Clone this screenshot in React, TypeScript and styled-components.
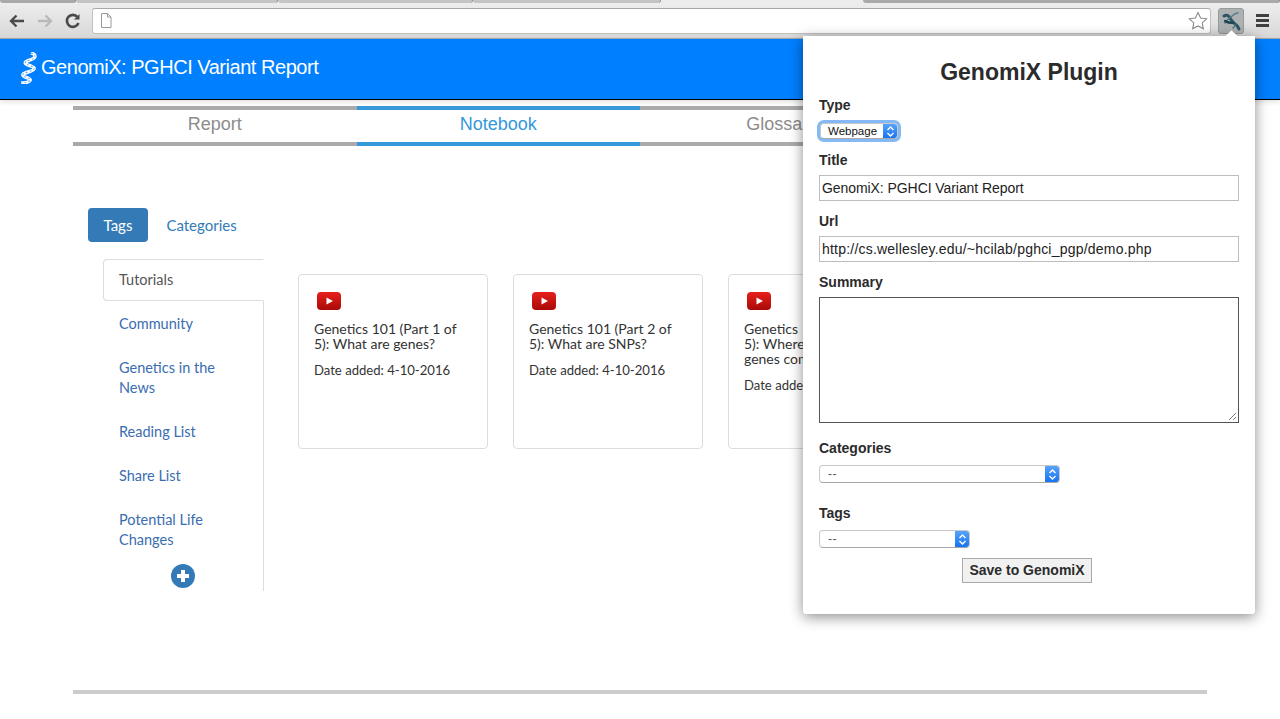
import React from 'react'
import styled, { createGlobalStyle } from 'styled-components'

const GlobalStyle = createGlobalStyle`
  html, body {
    margin: 0;
    padding: 0;
    height: 100%;
    background: #fff;
  }

  body {
    overflow: hidden;
    font-family: 'Liberation Sans', Arial, sans-serif;
  }

  * {
    box-sizing: border-box;
  }
`

const Page = styled.div`
  position: relative;
  width: 1280px;
  height: 719px;
  overflow: hidden;
`

const TabStrip = styled.div`
  display: flex;
  height: 3px;
  background: #ececec;
`

const StripTab = styled.div<{ $width: number; $gap?: number; $light?: boolean }>`
  width: ${({ $width }) => $width}px;
  margin-left: ${({ $gap }) => $gap || 0}px;
  height: 3px;
  background: ${({ $light }) => ($light ? '#c4c4c4' : '#a9a9a9')};
  border-right: 1px solid #8f8f8f;
  border-radius: 0 0 3px 3px;
`

const Toolbar = styled.div`
  display: flex;
  align-items: center;
  height: 36px;
  padding: 0 8px 0 8px;
  background: linear-gradient(#ededed, #d8d8d8);
  border-bottom: 1px solid #a6a6a6;
`

const NavIcon = styled.svg`
  width: 18px;
  height: 18px;
  margin-right: 10px;
  flex: none;
`

const Omnibox = styled.div`
  display: flex;
  align-items: center;
  justify-content: space-between;
  width: 1119px;
  height: 26px;
  padding: 0 2px 0 7px;
  background: #fff;
  border: 1px solid #c0c0c0;
  border-top-color: #a8a8a8;
  border-radius: 3px;
`

const ExtensionButton = styled.div`
  display: flex;
  align-items: center;
  justify-content: center;
  width: 26px;
  height: 26px;
  margin-left: 7px;
  background: #adb1b1;
  border: 1px solid #969a9b;
  border-radius: 3px;
`

const MenuButton = styled.div`
  display: flex;
  flex-direction: column;
  gap: 2px;
  width: 13px;
  margin-left: 12px;

  span {
    display: block;
    height: 3px;
    background: #3f3f3f;
  }
`

const Banner = styled.header`
  display: flex;
  align-items: center;
  gap: 4px;
  height: 61px;
  padding: 0 0 3px 20px;
  background: #007fff;
  border-bottom: 1px solid #000;
  color: #fff;
  font-size: 20px;
  letter-spacing: -0.47px;
  box-shadow: 0 2px 5px rgba(0, 0, 0, 0.12);
`

const Main = styled.main`
  width: 1134px;
  margin: 6px 0 0 73px;
`

const SectionTabs = styled.nav`
  display: grid;
  grid-template-columns: repeat(4, 1fr);
`

const SectionTab = styled.div<{ $active?: boolean }>`
  height: 40px;
  padding-top: 4px;
  border-top: 4px solid ${({ $active }) => ($active ? '#3498db' : '#aaaaaa')};
  border-bottom: 4px solid ${({ $active }) => ($active ? '#3498db' : '#aaaaaa')};
  color: ${({ $active }) => ($active ? '#3498db' : '#8c8c8c')};
  font-size: 18px;
  line-height: 20px;
  text-align: center;
`

const Notebook = styled.section`
  height: 548px;
  padding: 62px 0 0 15px;
  border-bottom: 4px solid #cccccc;
  font-family: Lato, 'Open Sans', sans-serif;
`

const Pills = styled.div`
  display: flex;
  gap: 3px;
  height: 34px;
`

const Pill = styled.div<{ $active?: boolean }>`
  height: 34px;
  padding: 0 15.5px;
  border-radius: 4px;
  background: ${({ $active }) => ($active ? '#337ab7' : 'transparent')};
  color: ${({ $active }) => ($active ? '#fff' : '#337ab7')};
  font-size: 15px;
  line-height: 34px;
`

const Columns = styled.div`
  display: flex;
  margin: 17px 0 0 15px;
`

const TagList = styled.div`
  display: flex;
  flex-direction: column;
  gap: 2px;
  width: 161px;
  height: 332px;
  border-right: 1px solid #dddddd;
`

const TagItem = styled.div<{ $active?: boolean }>`
  margin-right: ${({ $active }) => ($active ? '-1px' : '0')};
  padding: 10px 15px;
  border: 1px solid ${({ $active }) => ($active ? '#dddddd' : 'transparent')};
  border-right-color: ${({ $active }) => ($active ? '#fff' : 'transparent')};
  border-radius: 4px 0 0 4px;
  background: #fff;
  color: ${({ $active }) => ($active ? '#555555' : '#3a6db0')};
  font-size: 14.5px;
  line-height: 20px;
`

const AddButton = styled.svg`
  display: block;
  width: 24px;
  height: 24px;
  margin: 1px 0 0 68px;
`

const Cards = styled.div`
  display: flex;
  gap: 25px;
  margin: 15px 0 0 34px;
`

const Card = styled.article`
  flex: none;
  width: 190px;
  height: 175px;
  padding: 15px;
  border: 1px solid #dddddd;
  border-radius: 4px;
  background: #fff;
`

const CardIcon = styled.svg`
  display: block;
  width: 24px;
  height: 18px;
  margin: 2px 0 0 3px;
`

const CardTitle = styled.h3`
  margin: 11px 0 0;
  color: #333333;
  font-size: 14px;
  font-weight: 400;
  line-height: 15px;
`

const CardDate = styled.p`
  margin: 12px 0 0;
  color: #333333;
  font-size: 13.1px;
  line-height: 15px;
`

const Popup = styled.aside`
  position: absolute;
  top: 36px;
  left: 803px;
  width: 452px;
  height: 578px;
  padding: 22px 16px 0;
  background: #fff;
  border-radius: 0 0 3px 3px;
  box-shadow: 0 3px 14px rgba(0, 0, 0, 0.45);
  color: #2b2b2b;

  &::before {
    content: '';
    position: absolute;
    top: -4px;
    left: 424px;
    width: 9px;
    height: 9px;
    background: #fff;
    transform: rotate(45deg);
  }
`

const PopupTitle = styled.h1`
  margin: 0 0 11px;
  font-size: 23px;
  font-weight: 700;
  line-height: 28px;
  text-align: center;
`

const FieldLabel = styled.label<{ $gap?: number }>`
  display: block;
  margin-top: ${({ $gap }) => $gap || 0}px;
  font-size: 14px;
  font-weight: 700;
  line-height: 16px;
`

const TextField = styled.div<{ $spacing?: number }>`
  width: 420px;
  height: 26px;
  margin-top: 7px;
  padding: 0 2px;
  border: 1px solid #bdbdbd;
  color: #222;
  font-size: 14px;
  letter-spacing: ${({ $spacing }) => $spacing || 0}px;
  line-height: 24px;
`

const SummaryField = styled.div`
  position: relative;
  width: 420px;
  height: 126px;
  margin-top: 7px;
  border: 1px solid #555;
`

const Grip = styled.svg`
  position: absolute;
  right: 1px;
  bottom: 1px;
  width: 9px;
  height: 9px;
`

const SelectBox = styled.div<{ $width: number; $focused?: boolean }>`
  display: flex;
  justify-content: space-between;
  width: ${({ $width }) => $width}px;
  height: ${({ $focused }) => ($focused ? 16 : 18)}px;
  margin: ${({ $focused }) => ($focused ? '10px 0 0 1px' : '9px 0 0')};
  overflow: hidden;
  padding-left: ${({ $focused }) => ($focused ? 7 : 8)}px;
  background: #fff;
  border: 1px solid #c8c8c8;
  border-bottom-color: #a8a8a8;
  border-radius: 4px;
  color: ${({ $focused }) => ($focused ? '#111' : '#555')};
  font-size: ${({ $focused }) => ($focused ? 11.5 : 12)}px;
  letter-spacing: ${({ $focused }) => ($focused ? 0 : 0.5)}px;
  line-height: ${({ $focused }) => ($focused ? 14 : 16)}px;
  box-shadow: ${({ $focused }) => ($focused ? '0 0 0 3px #85b9f5' : 'none')};
`

const SelectArrows = styled.span`
  display: flex;
  align-items: center;
  justify-content: center;
  flex: none;
  width: 15px;
  margin: -1px -1px -1px 0;
  background: linear-gradient(#5aa6fb, #1470f0);
`

const SaveRow = styled.div`
  display: flex;
  justify-content: center;
  margin-top: 10px;
  padding-right: 4px;
`

const SaveButton = styled.button`
  width: 130px;
  height: 25px;
  padding: 0 0 2px;
  background: #f1f1f1;
  border: 1px solid #a9a9a9;
  color: #2b2b2b;
  font-family: 'Liberation Sans', Arial, sans-serif;
  font-size: 14px;
  font-weight: 700;
`

const videos = [
  { id: 1, title: 'Genetics 101 (Part 1 of 5): What are genes?' },
  { id: 2, title: 'Genetics 101 (Part 2 of 5): What are SNPs?' },
  { id: 3, title: 'Genetics 101 (Part 3 of 5): Where do human genes come from?' },
]

const tags = ['Tutorials', 'Community', 'Genetics in the News', 'Reading List', 'Share List', 'Potential Life Changes']

const helix = 'M11 1C17 3 16 6 10 8C3 10 4 12 11 14C16 16 15 18 8 20C1 22 1 24 8 26C13 28 9 31 1 31'

const DnaLogo = () => (
  <svg width="17" height="32" viewBox="0 0 17 32" fill="none">
    <path d={helix} stroke="#fff" strokeWidth="3.4" />
    <path d={helix} stroke="#6fb0f5" strokeWidth="1.1" strokeDasharray="2 2" />
  </svg>
)

const YouTubeIcon = () => (
  <CardIcon viewBox="0 0 24 18">
    <defs>
      <linearGradient id="yt" x1="0" y1="0" x2="0" y2="1">
        <stop offset="0" stopColor="#e8201c" />
        <stop offset="1" stopColor="#a80a08" />
      </linearGradient>
    </defs>
    <rect width="24" height="18" rx="4" fill="url(#yt)" />
    <path d="M9.500 5.500l6.500 3.500-6.500 3.500z" fill="#fff" />
  </CardIcon>
)

const StepperArrows = () => (
  <svg width="9" height="13" viewBox="0 0 9 13" fill="none" stroke="#fff" strokeWidth="1.4">
    <path d="M1.500 5L4.500 2l3 3M1.500 8l3 3 3-3" />
  </svg>
)

export default function App() {
  return (
    <Page>
      <GlobalStyle />
      <TabStrip>
        <StripTab $width={76} />
        <StripTab $width={202} $light />
        <StripTab $width={195} $light />
        <StripTab $width={188} $light />
        <StripTab $width={417} $gap={202} />
      </TabStrip>
      <Toolbar>
        <NavIcon viewBox="0 0 18 18" fill="none" stroke="#4a4a4a" strokeWidth="2.4">
          <path d="M16 9H3M8.500 3.500L3 9l5.500 5.500" />
        </NavIcon>
        <NavIcon viewBox="0 0 18 18" fill="none" stroke="#b9b9b9" strokeWidth="2.4">
          <path d="M2 9h13M9.500 3.500L15 9l-5.500 5.500" />
        </NavIcon>
        <NavIcon viewBox="0 0 18 18" fill="none" stroke="#4a4a4a" strokeWidth="2.6">
          <path d="M14.500 11a6 6 0 1 1-1-6" />
          <path d="M15.500 2v5.500H10z" fill="#4a4a4a" stroke="none" />
        </NavIcon>
        <Omnibox>
          <svg width="12" height="15" viewBox="0 0 12 15" fill="#fff" stroke="#9a9a9a">
            <path d="M1.500.5h6l3.500 3.500v10.500h-9.500zM7.500.5v3.500h3.500" />
          </svg>
          <svg width="20" height="19" viewBox="0 0 20 19" fill="#fff" stroke="#8a8a8a" strokeWidth="1.1">
            <path d="M10 1.500l2.600 5.500 6 .8-4.400 4.100 1.100 5.900-5.300-2.900-5.300 2.900 1.100-5.900L1.400 7.800l6-.8z" />
          </svg>
        </Omnibox>
        <ExtensionButton>
          <svg width="22" height="22" viewBox="0 0 22 22" fill="none" strokeLinecap="round">
            <path d="M4 6C7 4 9 6 10 8s2 4 5 6 3 3 4 5" stroke="#2c5564" strokeWidth="3" />
            <path d="M18 3c-3 0-5 2-7 4s-5 3-6 6" stroke="#55798a" strokeWidth="1.600" />
            <path d="M5 11c3 2 5 2 8 2" stroke="#1f4050" strokeWidth="2.200" />
            <path d="M13 18c2-1 2-2 2-3" stroke="#55798a" strokeWidth="1.500" />
          </svg>
        </ExtensionButton>
        <MenuButton>
          <span />
          <span />
          <span />
        </MenuButton>
      </Toolbar>
      <Banner>
        <DnaLogo />
        GenomiX: PGHCI Variant Report
      </Banner>
      <Main>
        <SectionTabs>
          <SectionTab>Report</SectionTab>
          <SectionTab $active>Notebook</SectionTab>
          <SectionTab>Glossary</SectionTab>
          <SectionTab />
        </SectionTabs>
        <Notebook>
          <Pills>
            <Pill $active>Tags</Pill>
            <Pill>Categories</Pill>
          </Pills>
          <Columns>
            <TagList>
              {tags.map((tag, i) => (
                <TagItem key={tag} $active={i === 0}>
                  {tag}
                </TagItem>
              ))}
              <AddButton viewBox="0 0 24 24">
                <circle cx="12" cy="12" r="12" fill="#337ab7" />
                <path d="M12 6v12M6 12h12" stroke="#fff" strokeWidth="4" />
              </AddButton>
            </TagList>
            <Cards>
              {videos.map(video => (
                <Card key={video.id}>
                  <YouTubeIcon />
                  <CardTitle>{video.title}</CardTitle>
                  <CardDate>Date added: 4-10-2016</CardDate>
                </Card>
              ))}
            </Cards>
          </Columns>
        </Notebook>
      </Main>
      <Popup>
        <PopupTitle>GenomiX Plugin</PopupTitle>
        <FieldLabel>Type</FieldLabel>
        <SelectBox $width={78} $focused>
          Webpage
          <SelectArrows>
            <StepperArrows />
          </SelectArrows>
        </SelectBox>
        <FieldLabel $gap={13}>Title</FieldLabel>
        <TextField $spacing={-0.07}>GenomiX: PGHCI Variant Report</TextField>
        <FieldLabel $gap={12}>Url</FieldLabel>
        <TextField $spacing={0.21}>http://cs.wellesley.edu/~hcilab/pghci_pgp/demo.php</TextField>
        <FieldLabel $gap={12}>Summary</FieldLabel>
        <SummaryField>
          <Grip viewBox="0 0 9 9" stroke="#777" fill="none">
            <path d="M1 8l7-7M5 8l3-3" />
          </Grip>
        </SummaryField>
        <FieldLabel $gap={17}>Categories</FieldLabel>
        <SelectBox $width={241}>
          --
          <SelectArrows>
            <StepperArrows />
          </SelectArrows>
        </SelectBox>
        <FieldLabel $gap={22}>Tags</FieldLabel>
        <SelectBox $width={151}>
          --
          <SelectArrows>
            <StepperArrows />
          </SelectArrows>
        </SelectBox>
        <SaveRow>
          <SaveButton>Save to GenomiX</SaveButton>
        </SaveRow>
      </Popup>
    </Page>
  )
}
